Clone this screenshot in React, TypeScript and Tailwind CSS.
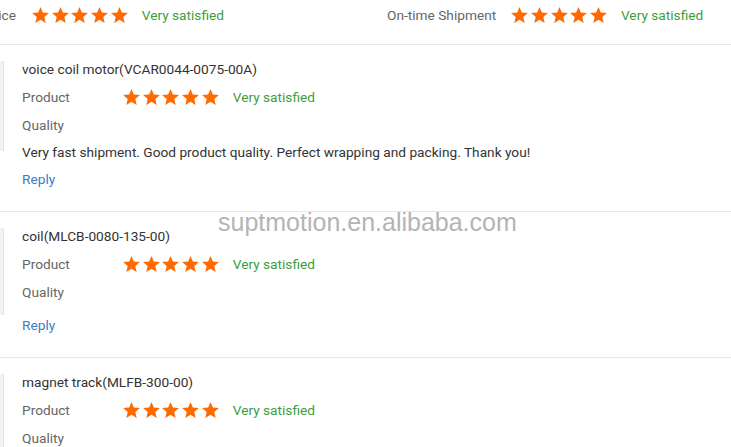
import React from "react";

const Star: React.FC = () => (
  <svg
    viewBox="0.5 0.5 19 18.1"
    className="w-[17px] h-[16px] shrink-0"
    aria-hidden="true"
  >
    <polygon
      fill="#ff6a00"
      points="10,0.5 12.65,6.86 19.51,7.41 14.28,11.89 15.88,18.59 10,15 4.12,18.59 5.72,11.89 0.49,7.41 7.35,6.86"
    />
  </svg>
);

const Stars: React.FC = () => (
  <div className="flex items-center gap-[2.7px]">
    {[0, 1, 2, 3, 4].map((i) => (
      <Star key={i} />
    ))}
  </div>
);

const Satisfied: React.FC = () => (
  <span className="text-[#3c9e3c]">Very satisfied</span>
);

type Review = {
  title: string;
  comment?: string;
  blockHeight: string;
  replyGap: string;
  showReply: boolean;
};

const reviews: Review[] = [
  {
    title: "voice coil motor(VCAR0044-0075-00A)",
    comment:
      "Very fast shipment. Good product quality. Perfect wrapping and packing. Thank you!",
    blockHeight: "h-[90px]",
    replyGap: "",
    showReply: true,
  },
  {
    title: "coil(MLCB-0080-135-00)",
    blockHeight: "h-[87px]",
    replyGap: "mt-[5px]",
    showReply: true,
  },
  {
    title: "magnet track(MLFB-300-00)",
    blockHeight: "h-[90px]",
    replyGap: "",
    showReply: false,
  },
];

const ReviewItem: React.FC<{ review: Review }> = ({ review }) => (
  <div className="border-b border-[#e6e6e6] pt-[10px] pb-[18px]">
    <div className="flex items-start">
      <div
        className={`w-[4px] mt-[6px] ${review.blockHeight} bg-[#f3f3f3] border-r border-[#e4e4e4] shrink-0`}
      />
      <div className="ml-[18px] flex flex-col">
        <div className="h-[28px] leading-[28px] text-[#333]">{review.title}</div>
        <div className="h-[28px] flex items-center">
          <span className="w-[101px] text-[#666]">Product</span>
          <Stars />
          <span className="ml-[14px]">
            <Satisfied />
          </span>
        </div>
        <div className="h-[28px] leading-[28px] text-[#666]">Quality</div>
        {review.comment && (
          <div className="h-[27px] leading-[27px] text-[#333] whitespace-nowrap">
            {review.comment}
          </div>
        )}
        {review.showReply && (
          <div
            className={`${review.comment ? "h-[27px] leading-[27px]" : "h-[28px] leading-[28px]"} ${review.replyGap} text-[#3b7dc4]`}
          >
            Reply
          </div>
        )}
      </div>
    </div>
  </div>
);

export default function App() {
  return (
    <div className="relative w-[731px] h-[447px] overflow-hidden bg-white font-['Roboto',sans-serif] text-[13.7px]">
      {/* store rating summary */}
      <div className="h-[44px] border-b border-[#e6e6e6]">
        <div className="mt-[1px] h-[28px] flex items-center">
          <div className="w-[387px] flex items-center">
            <span className="w-[80px] -ml-[64px] text-right text-[#666]">
              Service
            </span>
            <span className="ml-[16px]">
              <Stars />
            </span>
            <span className="ml-[14px]">
              <Satisfied />
            </span>
          </div>
          <div className="flex items-center">
            <span className="text-[#666]">On-time Shipment</span>
            <span className="ml-[15px]">
              <Stars />
            </span>
            <span className="ml-[14px]">
              <Satisfied />
            </span>
          </div>
        </div>
      </div>

      {reviews.map((r) => (
        <ReviewItem key={r.title} review={r} />
      ))}

      {/* watermark */}
      <div className="absolute left-[218px] top-[207px] font-['Liberation_Sans',Arial,sans-serif] text-[25px] leading-[30px] text-[#b4b4b4] pointer-events-none">
        suptmotion.en.alibaba.com
      </div>
    </div>
  );
}
